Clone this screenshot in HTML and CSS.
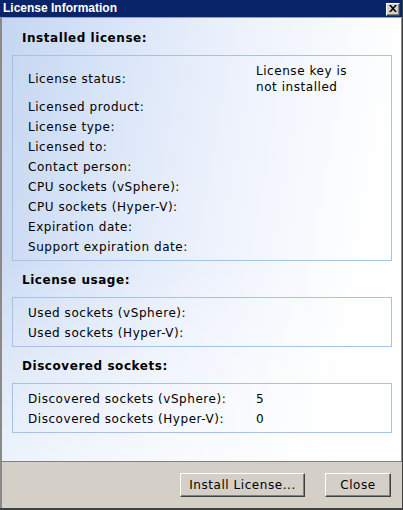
FILE: index.html
```html
<!DOCTYPE html>
<html>
<head>
<meta charset="utf-8">
<link rel="stylesheet" href="styles.css">
</head>
<body>
<div class="window">
  <div class="titlebar">
    <span class="title">License Information</span>
    <span class="close-btn">
      <svg width="8" height="7" viewBox="0 0 8 7"><path d="M0 0h2l2 2.2L6 0h2L5 3.5 8 7H6L4 4.8 2 7H0l3-3.5z" fill="#000"/></svg>
    </span>
  </div>
  <div class="content">
    <div class="heading">Installed license:</div>
    <div class="box box-main">
      <div class="row row-tall"><span class="label">License status:</span><span class="value">License key is<br>not installed</span></div>
      <div class="row"><span class="label">Licensed product:</span><span class="value"></span></div>
      <div class="row"><span class="label">License type:</span><span class="value"></span></div>
      <div class="row"><span class="label">Licensed to:</span><span class="value"></span></div>
      <div class="row"><span class="label">Contact person:</span><span class="value"></span></div>
      <div class="row"><span class="label">CPU sockets (vSphere):</span><span class="value"></span></div>
      <div class="row"><span class="label">CPU sockets (Hyper-V):</span><span class="value"></span></div>
      <div class="row"><span class="label">Expiration date:</span><span class="value"></span></div>
      <div class="row"><span class="label">Support expiration date:</span><span class="value"></span></div>
    </div>
    <div class="heading">License usage:</div>
    <div class="box">
      <div class="row"><span class="label">Used sockets (vSphere):</span><span class="value"></span></div>
      <div class="row"><span class="label">Used sockets (Hyper-V):</span><span class="value"></span></div>
    </div>
    <div class="heading">Discovered sockets:</div>
    <div class="box">
      <div class="row"><span class="label">Discovered sockets (vSphere):</span><span class="value">5</span></div>
      <div class="row"><span class="label">Discovered sockets (Hyper-V):</span><span class="value">0</span></div>
    </div>
  </div>
  <div class="footer">
    <button class="btn btn-install">Install License...</button>
    <button class="btn btn-close">Close</button>
  </div>
</div>
</body>
</html>
```

FILE: styles.css
```css
html, body {
  margin: 0;
  padding: 0;
  background: #d4d0c8;
}
.window {
  width: 403px;
  height: 510px;
  box-sizing: border-box;
  display: flex;
  flex-direction: column;
  font-family: "DejaVu Sans", Verdana, sans-serif;
  font-size: 12px;
  letter-spacing: 0.55px;
  color: #000;
  border-bottom: 2px solid #404040;
  border-right: 1px solid #404040;
}
.titlebar {
  height: 17px;
  flex: none;
  background: #0a246a;
  display: flex;
  align-items: center;
  justify-content: space-between;
  padding: 0 2px 0 3px;
  border-bottom: 1px solid #a0a0a0;
  letter-spacing: 0;
}
.title {
  color: #fff;
  font-family: "Liberation Sans", Arial, sans-serif;
  font-weight: bold;
  font-size: 12px;
  line-height: 17px;
}
.close-btn {
  width: 14px;
  height: 13px;
  box-sizing: border-box;
  background: #d4d0c8;
  border-top: 1px solid #fff;
  border-left: 1px solid #fff;
  border-right: 1px solid #404040;
  border-bottom: 1px solid #404040;
  box-shadow: inset -1px -1px 0 #808080;
  display: flex;
  align-items: center;
  justify-content: center;
  margin-top: 1px;
}
.close-btn svg { display: block; margin: 0 1px 1px 0; }
.content {
  flex: 1;
  box-sizing: border-box;
  padding: 12px 9px 0 10px;
  border-left: 2px solid #8a8a8a;
  border-right: 1px solid #8a8a8a;
  background:
    linear-gradient(to bottom, rgba(255,255,255,0) 0%, rgba(255,255,255,0) 55%, rgba(255,255,255,0.6) 100%),
    linear-gradient(100deg, #c4d6f1 0%, #d9e5f8 25%, #e9effb 45%, #f4f7fd 65%, #ffffff 85%);
}
.heading {
  font-weight: bold;
  font-size: 12px;
  line-height: 16px;
  margin-left: 10px;
  margin-bottom: 9px;
}
.box {
  border: 1px solid #a8c2e6;
  padding: 5px 15px 3px 15px;
  margin-bottom: 11px;
}
.box-main {
  padding-top: 6px;
  padding-bottom: 3px;
}
.row {
  display: grid;
  grid-template-columns: 228px 1fr;
  align-items: center;
  height: 20px;
  line-height: 16px;
}
.row-tall {
  height: 35px;
  padding-bottom: 2px;
  box-sizing: border-box;
}
.footer {
  height: 47px;
  flex: none;
  box-sizing: border-box;
  border-top: 1px solid #808080;
  border-left: 2px solid #8a8a8a;
  background: #d4d0c8;
  display: flex;
  justify-content: flex-end;
  align-items: flex-start;
  gap: 20px;
  padding: 11px 11px 0 0;
}
.btn {
  height: 24px;
  box-sizing: border-box;
  background: #d4d0c8;
  font-family: "DejaVu Sans", Verdana, sans-serif;
  font-size: 12px;
  letter-spacing: 0.55px;
  color: #000;
  border-top: 1px solid #fff;
  border-left: 1px solid #fff;
  border-right: 1px solid #404040;
  border-bottom: 1px solid #404040;
  box-shadow: inset -1px -1px 0 #808080;
  padding: 0 0 1px 0;
  margin: 0;
}
.btn-install { width: 125px; }
.btn-close { width: 66px; }
```
